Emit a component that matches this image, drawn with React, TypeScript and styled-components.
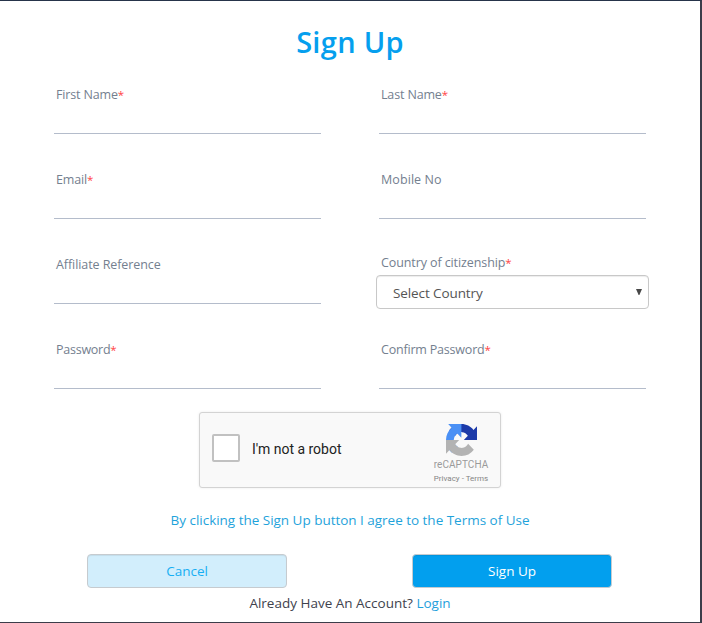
import React from "react";
import styled, { createGlobalStyle } from "styled-components";

const GlobalStyle = createGlobalStyle`
  * { box-sizing: border-box; }
  body { margin: 0; background: #fff; font-family: "Open Sans", "Noto Sans", sans-serif; }
`;

const Panel = styled.main`
  width: 702px;
  height: 623px;
  background: #fff;
  border: solid #3b3d4a;
  border-width: 1px 2px 1px 0;
  border-top-color: #26344a;
  overflow: hidden;
`;

const Title = styled.h1`
  margin: 21px 0 0;
  height: 40px;
  line-height: 40px;
  font-size: 29px;
  font-weight: 600;
  letter-spacing: 0.3px;
  text-align: center;
  color: #059fee;
`;

const Form = styled.form`
  margin: 0;
`;

const Fields = styled.div`
  display: grid;
  grid-template-columns: 267px 267px;
  grid-auto-rows: 49px;
  gap: 36px 58px;
  margin: 23px 0 0 54px;
`;

const Field = styled.div`
  display: flex;
  flex-direction: column;
  border-bottom: 1px solid #b4bccb;
`;

const SelectField = styled.div`
  display: flex;
  flex-direction: column;
  margin: -2px -3px -6px;
`;

const Label = styled.label<{ $track?: number; $indent?: number }>`
  padding-left: ${(p) => p.$indent ?? 2}px;
  height: 20px;
  line-height: 20px;
  white-space: nowrap;
  font-size: 12.5px;
  letter-spacing: ${(p) => p.$track ?? 0}px;
  color: #74808f;
`;

const Required = styled.span`
  font-size: 11.5px;
  line-height: 1;
  color: #ff4346;
`;

const Input = styled.input`
  width: 100%;
  height: 28px;
  padding: 0 2px;
  border: 0;
  outline: 0;
  background: transparent;
  font: inherit;
  font-size: 13px;
`;

const Select = styled.button`
  display: flex;
  align-items: center;
  justify-content: space-between;
  height: 34px;
  margin-top: 2px;
  padding: 1px 6px 0 16px;
  border: 1px solid #c8c8c8;
  border-radius: 4px;
  background: #fff;
  box-shadow: inset 0 1px 1px rgba(0, 0, 0, 0.075);
  font-family: inherit;
  font-size: 13.5px;
  letter-spacing: -0.1px;
  color: #555;
`;

const Arrow = styled.svg`
  width: 6px;
  height: 6px;
  margin-top: -2px;
  fill: #484848;
`;

const Captcha = styled.div`
  display: flex;
  width: 302px;
  height: 76px;
  margin: 23px 0 0 199px;
  padding-left: 12px;
  align-items: center;
  border: 1px solid #d3d3d3;
  border-radius: 3px;
  background: #f9f9f9;
  box-shadow: 0 0 3px 0 rgba(0, 0, 0, 0.08);
  font-family: Roboto, sans-serif;
`;

const Checkbox = styled.span`
  width: 28px;
  height: 28px;
  margin-top: -4px;
  border: 2px solid #c1c1c1;
  border-radius: 2px;
  background: #fff;
`;

const CaptchaText = styled.span`
  flex: 1;
  margin: -2px 0 0 12px;
  font-size: 14px;
  letter-spacing: -0.02px;
  color: #222;
`;

const Brand = styled.div`
  display: flex;
  flex-direction: column;
  align-items: center;
  align-self: stretch;
  width: 78px;
  padding-top: 11px;
  color: #9b9b9b;
`;

const BrandName = styled.span`
  margin-top: 2px;
  line-height: 13px;
  font-size: 10px;
  letter-spacing: 0.05px;
`;

const BrandLinks = styled.span`
  margin-top: 3px;
  line-height: 10px;
  font-size: 8px;
  color: #858585;
`;

const Terms = styled.a`
  display: block;
  margin-top: 22px;
  line-height: 20px;
  text-align: center;
  font-size: 13.5px;
  letter-spacing: -0.02px;
  color: #1fa3db;
`;

const Actions = styled.div`
  display: flex;
  gap: 125px;
  margin: 24px 0 0 87px;
`;

const Button = styled.button<{ $primary?: boolean }>`
  width: 200px;
  height: 34px;
  padding: 0 0 1px;
  border: 1px solid #c6cbcf;
  border-radius: 4px;
  background: ${(p) => (p.$primary ? "#029fee" : "#d2eefc")};
  box-shadow: inset 0 1px 1px rgba(0, 0, 0, 0.075);
  font-family: inherit;
  font-size: 13.5px;
  font-weight: ${(p) => (p.$primary ? 500 : 400)};
  color: ${(p) => (p.$primary ? "#fff" : "#17aef3")};
`;

const Footer = styled.p`
  margin: 5px 0 0;
  line-height: 20px;
  text-align: center;
  font-size: 13.5px;
  color: #40424d;
`;

const LoginLink = styled.a`
  color: #1fa0dc;
`;

function RecaptchaLogo() {
  return (
    <svg width="31" height="32" viewBox="0 0 64 64" preserveAspectRatio="none">
      <path fill="#1c3aa9" d="M64 31.955a33.3 33.3 0 0 0-.021-1.379V4.58l-7.187 7.187C50.911 4.567 41.96 0 31.94 0A31.97 31.97 0 0 0 6.57 12.483l11.78 11.904a15.6 15.6 0 0 1 4.77-5.354c2.06-1.607 4.978-2.92 9.008-2.92.487 0 .863.057 1.139.164 5 .394 9.323 3.148 11.87 7.145l-8.338 8.338L64 31.955" />
      <path fill="#4a90f5" d="M31.862.094a34 34 0 0 0-1.38.021H4.487l7.187 7.187C4.474 13.183 0 22.134 0 32.154a31.97 31.97 0 0 0 12.39 25.369l11.904-11.78a15.6 15.6 0 0 1-5.354-4.77c-1.607-2.06-2.92-4.978-2.92-9.008 0-.487.057-.863.164-1.139.394-5 3.148-9.323 7.145-11.87l8.338 8.338L31.862.094" />
      <path fill="#b3b3b3" d="M0 32.045c.002.46.01.92.021 1.38V59.42l7.187-7.187C13.09 59.433 22.04 64 32.06 64a31.97 31.97 0 0 0 25.37-12.483L45.65 39.613a15.6 15.6 0 0 1-4.77 5.354c-2.06 1.607-4.978 2.92-9.008 2.92-.487 0-.863-.057-1.139-.164-5-.394-9.323-3.148-11.87-7.145l8.338-8.338L0 32.045" />
    </svg>
  );
}

type TextFieldProps = { label: string; required?: boolean; track?: number; type?: string };

function TextField({ label, required, track, type = "text" }: TextFieldProps) {
  return (
    <Field>
      <Label $track={track}>
        {label}
        {required && <Required>*</Required>}
      </Label>
      <Input type={type} aria-label={label} />
    </Field>
  );
}

export default function App() {
  return (
    <Panel>
      <GlobalStyle />
      <Title>Sign Up</Title>
      <Form>
        <Fields>
          <TextField label="First Name" required track={-0.15} />
          <TextField label="Last Name" required track={-0.15} />
          <TextField label="Email" required track={-0.15} />
          <TextField label="Mobile No" track={0.08} />
          <TextField label="Affiliate Reference" track={-0.08} />
          <SelectField>
            <Label $indent={5} $track={-0.1}>
              Country of citizenship<Required>*</Required>
            </Label>
            <Select type="button">
              Select Country
              <Arrow viewBox="0 0 6 7" preserveAspectRatio="none">
                <path d="M0 0h6L3.4 7h-.8z" />
              </Arrow>
            </Select>
          </SelectField>
          <TextField label="Password" required type="password" track={-0.25} />
          <TextField label="Confirm Password" required type="password" track={-0.2} />
        </Fields>
        <Captcha>
          <Checkbox role="checkbox" aria-checked={false} />
          <CaptchaText>I'm not a robot</CaptchaText>
          <Brand>
            <RecaptchaLogo />
            <BrandName>reCAPTCHA</BrandName>
            <BrandLinks>Privacy - Terms</BrandLinks>
          </Brand>
        </Captcha>
        <Terms>By clicking the Sign Up button I agree to the Terms of Use</Terms>
        <Actions>
          <Button type="button">Cancel</Button>
          <Button type="button" $primary>Sign Up</Button>
        </Actions>
      </Form>
      <Footer>
        Already Have An Account? <LoginLink>Login</LoginLink>
      </Footer>
    </Panel>
  );
}
